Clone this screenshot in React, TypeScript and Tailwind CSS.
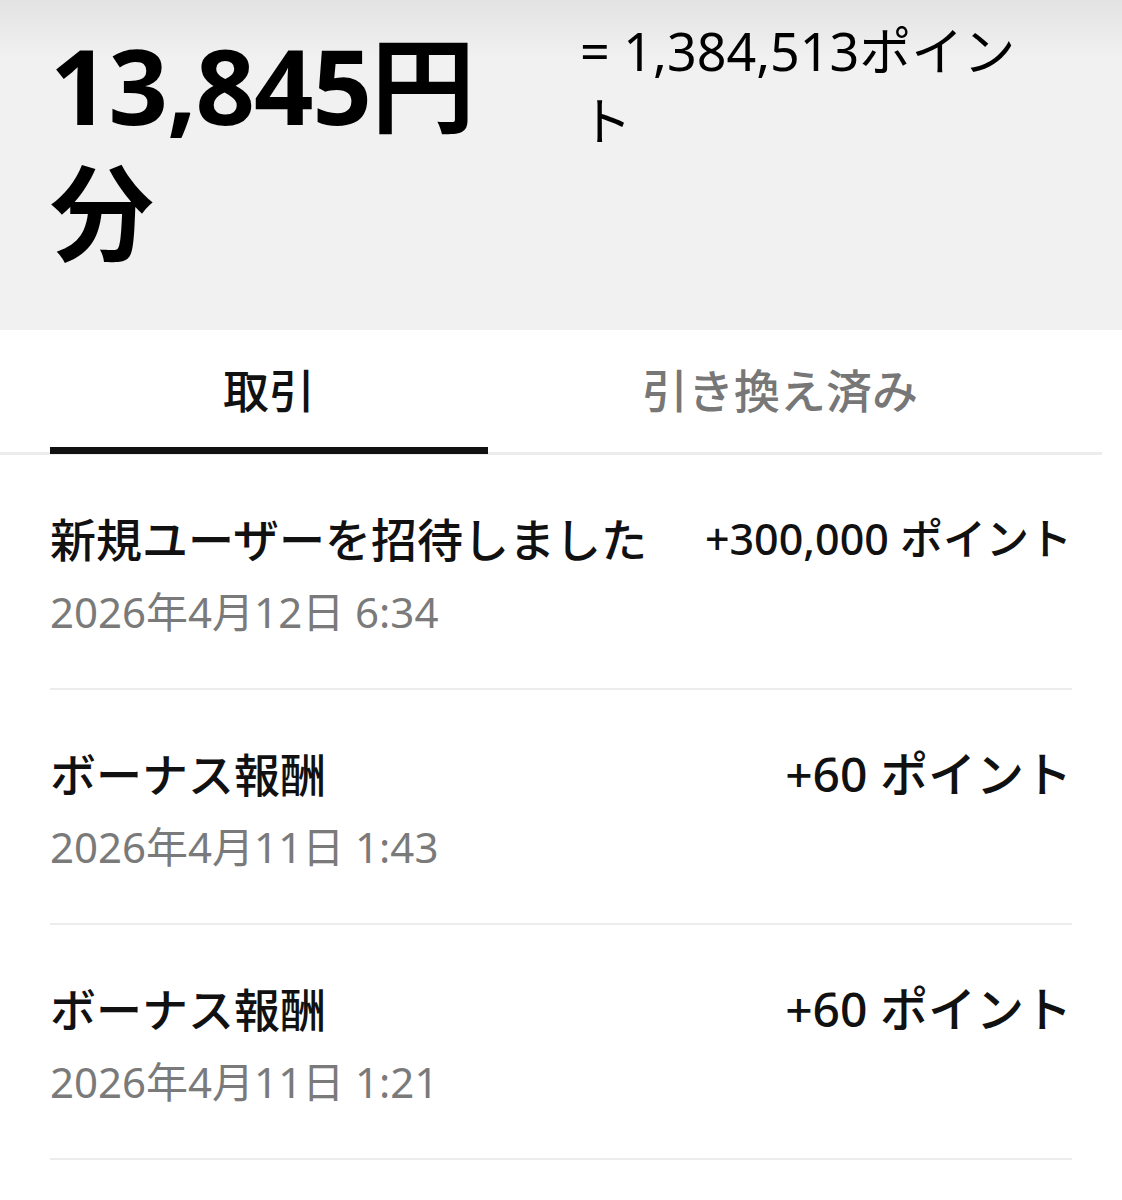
import React from "react"

const rows = [
  { title: "新規ユーザーを招待しました", amount: "+300,000 ポイント", date: "2026年4月12日 6:34", small: true },
  { title: "ボーナス報酬", amount: "+60 ポイント", date: "2026年4月11日 1:43", small: false },
  { title: "ボーナス報酬", amount: "+60 ポイント", date: "2026年4月11日 1:21", small: false },
]

export default function App() {
  return (
    <div
      className="w-[1122px] min-h-[1200px] bg-white text-[#111]"
      style={{ fontFamily: '"Noto Sans", "Noto Sans CJK JP", sans-serif' }}
    >
      {/* Balance header */}
      <div className="h-[330px] bg-[linear-gradient(to_bottom,#e3e3e3,#f1f1f1_18%,#f1f1f1)] flex">
        <div className="w-[530px] pl-[50px] pt-[21px] text-[104px] leading-[128px] font-bold tracking-[-1px] text-black">
          13,845円分
        </div>
        <div className="w-[490px] pl-[50px] pt-[16px] text-[52px] leading-[70px] text-black">= 1,384,513ポイント</div>
      </div>

      {/* Tabs */}
      <div className="flex pl-[50px] pr-[30px] pt-[34px] mr-[20px] border-b-[3px] border-[#ececec]">
        <div className="w-[438px] flex flex-col items-center">
          <span className="text-[46px] leading-[52px] font-medium text-[#111]">取引</span>
          <div className="mt-[31px] h-[7px] w-full bg-[#111] -mb-[2px]" />
        </div>
        <div className="w-[584px] flex flex-col items-center">
          <span className="text-[46px] leading-[52px] font-medium text-[#777]">引き換え済み</span>
        </div>
      </div>

      {/* Transactions */}
      <div className="px-[50px]">
        {rows.map((r, i) => (
          <div key={i} className="pt-[55px] pb-[51px] border-b-2 border-[#ececec]">
            <div className="flex justify-between items-center h-[58px]">
              <span className="text-[46px] leading-[58px] font-medium">{r.title}</span>
              <span className={r.small ? "text-[43px] leading-[58px] font-medium" : "text-[48px] leading-[58px] font-medium"}>
                {r.amount}
              </span>
            </div>
            <div className="mt-[19px] text-[42px] leading-[50px] text-[#7a7a7a]">{r.date}</div>
          </div>
        ))}
      </div>
    </div>
  )
}
